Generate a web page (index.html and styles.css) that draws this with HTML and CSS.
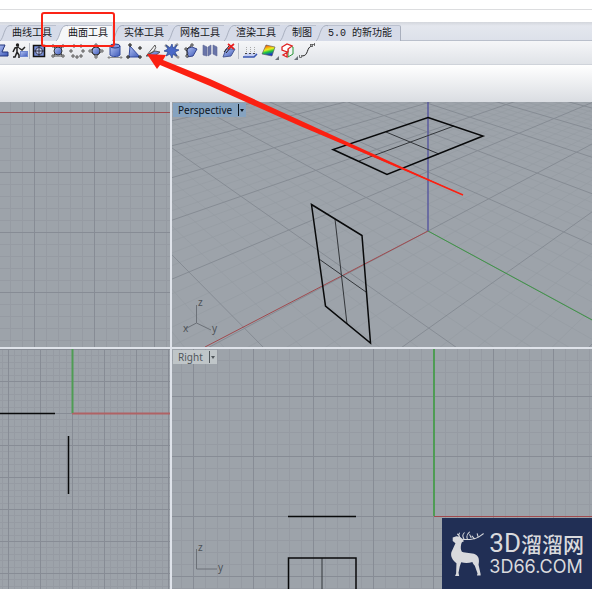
FILE: index.html
```html
<!DOCTYPE html>
<html lang="zh-CN">
<head>
<meta charset="utf-8">
<meta name="viewport" content="width=device-width, initial-scale=1">
<title>曲面工具</title>
<link rel="stylesheet" href="styles.css">
</head>
<body>
<svg class="defs" aria-hidden="true">
  <defs>
    <linearGradient id="blue" x1="0" y1="0" x2="1" y2="1"><stop offset="0" stop-color="#b4c4f4"/><stop offset="1" stop-color="#3c58b8"/></linearGradient>
    <linearGradient id="rainbow" x1="0" y1="0" x2="0.3" y2="1"><stop offset="0" stop-color="#e02010"/><stop offset=".3" stop-color="#f8a010"/><stop offset=".5" stop-color="#e8f020"/><stop offset=".7" stop-color="#20c840"/><stop offset="1" stop-color="#1830d0"/></linearGradient>
    <pattern id="grid-top" x="34" y="112" width="60" height="60" patternUnits="userSpaceOnUse">
      <path class="minor" d="M12.5 0V60M24.5 0V60M36.5 0V60M48.5 0V60M0 12.5H60M0 24.5H60M0 36.5H60M0 48.5H60"/>
      <path class="major" d="M.5 0V60M0 .5H60"/>
    </pattern>
    <pattern id="grid-front" x="8" y="381" width="32" height="32" patternUnits="userSpaceOnUse">
      <path class="minor" d="M6.5 0V32M13.5 0V32M19.5 0V32M26.5 0V32M0 6.5H32M0 13.5H32M0 19.5H32M0 26.5H32"/>
      <path class="major" d="M.5 0V32M0 .5H32"/>
    </pattern>
    <pattern id="grid-right" x="193" y="396" width="60" height="60" patternUnits="userSpaceOnUse">
      <path class="minor" d="M12.5 0V60M24.5 0V60M36.5 0V60M48.5 0V60M0 12.5H60M0 24.5H60M0 36.5H60M0 48.5H60"/>
      <path class="major" d="M.5 0V60M0 .5H60"/>
    </pattern>
  </defs>
</svg>

<header class="header">
  <div class="command"></div>
  <nav class="tabs" aria-label="工具">
    <button class="tab" type="button"><svg class="slash" viewBox="0 0 12 16"><path d="M0 16C4 13 4 1 10 .5H12V16Z"/></svg><span>曲线工具</span></button>
    <button class="tab active" type="button" aria-current="true"><svg class="slash" viewBox="0 0 12 16"><path d="M0 16C4 13 4 1 10 .5H12V16Z"/></svg><span>曲面工具</span></button>
    <button class="tab" type="button"><svg class="slash" viewBox="0 0 12 16"><path d="M0 16C4 13 4 1 10 .5H12V16Z"/></svg><span>实体工具</span></button>
    <button class="tab" type="button"><svg class="slash" viewBox="0 0 12 16"><path d="M0 16C4 13 4 1 10 .5H12V16Z"/></svg><span>网格工具</span></button>
    <button class="tab" type="button"><svg class="slash" viewBox="0 0 12 16"><path d="M0 16C4 13 4 1 10 .5H12V16Z"/></svg><span>渲染工具</span></button>
    <button class="tab" type="button"><svg class="slash" viewBox="0 0 12 16"><path d="M0 16C4 13 4 1 10 .5H12V16Z"/></svg><span>制图</span></button>
    <button class="tab last" type="button"><svg class="slash" viewBox="0 0 12 16"><path d="M0 16C4 13 4 1 10 .5H12V16Z"/></svg><span>5.0 的新功能</span></button>
  </nav>
  <div class="toolbar" role="toolbar" aria-label="曲面工具">
    <div class="group lead">
      <button class="tool" type="button" aria-label="曲面"><svg viewBox="0 0 16 16"><path d="M4 2h8l-3 7h6v4H6z" fill="url(#blue)" stroke="#25367c"/></svg></button>
      <button class="tool" type="button" aria-label="搬移"><svg viewBox="0 0 16 16"><rect x="8.500" y="8.500" width="7" height="5" fill="url(#blue)" stroke="#7088d0"/><circle cx="5.500" cy="2" r="1.700" fill="#222"/><path d="M7 4L3 5 1 9M5 5v4l-2 5H1M5 9l2 3v3M7 5l3 2 3-3" fill="none" stroke="#222" stroke-width="1.500"/></svg></button>
    </div>
    <div class="group">
      <button class="tool" type="button" aria-label="平面"><svg viewBox="0 0 16 16"><rect x="2.500" y="2.500" width="11" height="11" fill="#7890dc" stroke="#111" stroke-width="1.500"/><circle cx="8" cy="8" r="3.500" fill="#c4d0f8" stroke="#334"/><path d="M8 3v10M3 8h10" stroke="#334"/></svg></button>
      <button class="tool" type="button" aria-label="角点"><svg viewBox="0 0 16 16"><path d="M3 3l10 10M13 3L3 13" stroke="#444"/><circle cx="8" cy="8" r="4" fill="url(#blue)" stroke="#333"/><path d="M2 2h2v2H2zM12 2h2v2h-2zM2 12h2v2H2zM12 12h2v2h-2z" fill="#fff" stroke="#555"/><path d="M4 13h8" stroke="#555"/></svg></button>
      <button class="tool" type="button" aria-label="点阵"><svg viewBox="0 0 16 16"><path d="M4 2h2v2H4zM11 2h2v2h-2zM1 7h2v2H1zM13 7h2v2h-2zM3 12h2v2H3zM7 13h2v2H7zM11 12h2v2h-2z" fill="#fff" stroke="#333" stroke-width=".8"/></svg></button>
      <button class="tool" type="button" aria-label="嵌面"><svg viewBox="0 0 16 16"><path d="M8 2l6 6-6 6-6-6z" fill="#e8eaf0" stroke="#777"/><circle cx="8" cy="8" r="4" fill="url(#blue)" stroke="#333"/><path d="M7 1h2v2H7zM13 7h2v2h-2zM7 13h2v2H7zM1 7h2v2H1z" fill="#fff" stroke="#444" stroke-width=".8"/></svg></button>
      <button class="tool" type="button" aria-label="挤出"><svg viewBox="0 0 16 16"><path d="M3 3v9c1 2 9 2 10 0V3z" fill="url(#blue)" stroke="#334a9c"/><ellipse cx="8" cy="3" rx="5" ry="2" fill="#7f94e0" stroke="#26387c"/><path d="M1 14.500h14M2.500 13L1 14.500 2.500 16M13.500 13l1.500 1.500-1.500 1.500" fill="none" stroke="#777" stroke-width=".8"/></svg></button>
      <button class="tool" type="button" aria-label="三角曲面"><svg viewBox="0 0 16 16"><path d="M4 3l10 11H3z" fill="url(#blue)" stroke="#334a9c"/><path d="M3 1h2v2H3zM1 13h2v2H1zM13 13h2v2h-2zM13 4h2v2h-2z" fill="#fff" stroke="#111"/></svg></button>
      <button class="tool" type="button" aria-label="旋转"><svg viewBox="0 0 16 16"><path d="M1 13l9-5 5 1-5 4z" fill="url(#blue)" stroke="#444" stroke-width=".8"/><path d="M2 12L10 2q2 2-1 6z" fill="#f2f2f2" stroke="#333" stroke-width=".8"/></svg></button>
      <button class="tool" type="button" aria-label="炸开"><svg viewBox="0 0 16 16"><path d="M1 2l4 3M10 11l5 4M11 3l3-2" stroke="#999" stroke-width="2.500"/><path d="M8 1l1 4 4-3-2 4 4 1-4 2 2 4-4-2-1 4-2-4-4 2 2-4-4-1 4-2-2-4 4 3z" fill="#4868c8" stroke="#24408c" stroke-width=".7"/></svg></button>
      <button class="tool" type="button" aria-label="扫掠"><svg viewBox="0 0 16 16"><path d="M3 6l6-2 5 2-4 7-6 1 1-4z" fill="url(#blue)" stroke="#33438c"/><path d="M4 12V6l5-4" fill="none" stroke="#222"/><path d="M8 1h2v2H8zM3 12h2v2H3zM2 5h2v2H2z" fill="#fff" stroke="#222" stroke-width=".8"/></svg></button>
      <button class="tool" type="button" aria-label="放样"><svg viewBox="0 0 16 16"><path d="M1 2l4 2v9l-4-1zM6 4l3-2v9l-3 2zM11 2l4 2v9l-4-2z" fill="#6874a8" stroke="#5b6494" stroke-width=".6"/></svg></button>
      <button class="tool" type="button" aria-label="删除曲面"><svg viewBox="0 0 16 16"><path d="M5 6h9l-4 7-8 1z" fill="url(#blue)" stroke="#485894"/><path d="M3 9l5-6M5 10l5-6" stroke="#222"/><path d="M7 1l6 5M13 1L7 6" stroke="#e82020" stroke-width="1.700"/></svg></button>
    </div>
    <div class="group">
      <button class="tool" type="button" aria-label="投影"><svg viewBox="0 0 16 16"><path d="M4 10h11l-3 4H1z" fill="#c5cff2"/><path d="M1 14h11l3-3" fill="none" stroke="#3754b0" stroke-width="1.500"/><path d="M4.500 4v6M8.500 4v6M12.500 4v6" stroke="#aaa" stroke-dasharray="1 1"/><path d="M3 10.500h2M7 10.500h2M11 10.500h2" stroke="#444"/></svg></button>
      <button class="tool more" type="button" aria-label="曲率分析"><svg viewBox="0 0 16 16"><path d="M5 2l9 2-3 9-10-2z" fill="url(#rainbow)" stroke="#555" stroke-width=".6"/></svg></button>
      <button class="tool more" type="button" aria-label="方向"><svg viewBox="0 0 16 16"><path d="M6 2l7 2v7l-5 3V6z" fill="#f4f4f4" stroke="#279437"/><path d="M2 4l5-3 5 2-4 3v3l-5 3 4 2V9L2 7z" fill="#fff" stroke="#e02020" stroke-width="1.300"/></svg></button>
      <button class="tool" type="button" aria-label="混接曲线"><svg viewBox="0 0 16 16"><path d="M3 13c7 0 4-9 10-10" fill="none" stroke="#222"/><path d="M.500 12v2.500h2V12M11.500 1v3M13.500 1v3M15.500 0v3M11 1.500h5" fill="none" stroke="#555" stroke-width=".8"/></svg></button>
    </div>
  </div>
  <div class="panel"></div>
</header>

<main class="viewports">
  <section class="viewport" aria-label="Top">
    <svg class="scene" viewBox="0 102 170 245" preserveAspectRatio="xMinYMin slice">
      <rect x="0" y="102" width="170" height="245" fill="url(#grid-top)"/>
      <path class="axis-x" d="M0 112.500H170"/>
    </svg>
  </section>

  <section class="viewport" aria-label="Perspective">
    <svg class="scene" viewBox="172 102 420 245" preserveAspectRatio="xMinYMin slice">
      <path class="persp-minor" id="persp-minor"/>
      <path class="persp-major" id="persp-major"/>
      <path class="axis-x" d="M428 231L205 347"/>
      <path class="axis-y thin" d="M428 231L592 320"/>
      <path class="axis-z" d="M428 231V102"/>
      <path class="iso" d="M386 132L439 154M359 161L454 126M335 219L347 324M319 259L366 292"/>
      <path class="edge" d="M428 117.500L483 136 387 174.500 333 149.500ZM311.500 204.500L362 235.500 370.500 343 325.500 306Z"/>
      <path class="gnomon" d="M196.500 305V323L186 328.500M196.500 323L211 330"/>
      <text class="gnomon-label" x="198" y="306">z</text><text class="gnomon-label" x="183" y="332">x</text><text class="gnomon-label" x="212" y="332">y</text>
    </svg>
    <button class="view-title current" type="button"><span>Perspective</span><i class="caret"></i></button>
  </section>

  <section class="viewport" aria-label="Front">
    <svg class="scene" viewBox="0 349 170 240" preserveAspectRatio="xMinYMin slice">
      <rect x="0" y="349" width="170" height="240" fill="url(#grid-front)"/>
      <path class="axis-x wide" d="M72 413.500H170"/>
      <path class="axis-y" d="M72.500 349V413"/>
      <path class="edge" d="M0 413.500H55M68.500 436V494"/>
    </svg>
  </section>

  <section class="viewport" aria-label="Right">
    <svg class="scene" viewBox="172 349 420 240" preserveAspectRatio="xMinYMin slice">
      <rect x="172" y="349" width="420" height="240" fill="url(#grid-right)"/>
      <path class="axis-x" d="M434 516.500H592"/>
      <path class="axis-y" d="M434 349V516"/>
      <path class="iso" d="M322 558V589"/>
      <path class="edge" d="M288 516.500H356M288.500 589V558H356V589"/>
      <path class="gnomon" d="M196.500 549V569H217"/>
      <text class="gnomon-label" x="198" y="551">z</text><text class="gnomon-label" x="218" y="571">y</text>
    </svg>
    <button class="view-title" type="button"><span>Right</span><i class="caret"></i></button>
  </section>
</main>

<div class="highlight"></div>
<svg class="arrow" viewBox="0 0 320 146" aria-hidden="true"><path d="M0 2L19 3 16 8 63 27 316 143 153 74 63 34 13 13 10 17Z" fill="#fb2012"/><path d="M153 72L316 143" stroke="#fb2012" stroke-width="1.500"/></svg>

<aside class="brand">
  <svg class="deer" viewBox="55 65 100 135" aria-hidden="true">
    <path fill="#d9dadd" d="M63 84L74 80 84 82 92 89 96 95 90 98 88 103C86 112 86 119 90 126 101 131 119 128 130 134 140 140 142 150 139 164L145 191 145 196H134L136 190 128 167C124 163 122 160 121 156 110 160 99 160 88 157L84 168 80 188 82 197H70L73 190 74 160C62 149 56 140 59 127L71 101 63 94Z"/>
    <path fill="none" stroke="#d9dadd" stroke-width="3" stroke-linecap="round" d="M90 89C101 91 126 91 140 82L153 73M88 88C81 83 79 77 83 71M96 88C91 81 91 76 97 70M106 88C103 80 106 73 112 68M117 84L113 76M127 88L120 80M138 83L135 73M83 80L77 74"/>
  </svg>
  <div class="brand-text">
    <div class="brand-name"><b>3D</b><span>溜溜网</span></div>
    <div class="brand-url">3D66.COM</div>
  </div>
</aside>
<script src="grid.js"></script>
</body>
</html>
```
FILE: styles.css
```css
* { box-sizing: border-box; }
html, body { margin: 0; min-height: 100%; }
body {
  position: relative;
  display: flex;
  flex-direction: column;
  min-height: 100vh;
  overflow: hidden;
  background: #dde1e9;
  font-family: "Noto Sans", "Noto Sans CJK SC", sans-serif;
}
button { border: 0; padding: 0; background: none; font: inherit; color: inherit; }
.defs { position: absolute; width: 0; height: 0; }

.header { flex: none; }
.command { height: 22px; background: linear-gradient(#fff 9px, #dcdddf 9px, #dcdddf 10px, #fff 10px); }

.tabs {
  display: flex;
  align-items: flex-end;
  height: 19px;
  background: linear-gradient(#d3d6dc, #e4e7ee 4px, #dde1ea);
  border-bottom: 1px solid #b9bfcb;
  color: #16181c;
  font: 10px/16px "Liberation Mono", "Noto Sans CJK SC", monospace;
  white-space: pre;
}
.tab { display: flex; align-items: stretch; height: 16px; margin-bottom: -1px; }
.tab span { padding-right: 4px; border-top: 1px solid #bac0ce; background: #d6dbe8; }
.tab.active span { background: #f6f7f9; }
.tab.last span { padding-right: 8px; border-right: 1px solid #a9afbd; border-radius: 0 2px 0 0; }
.slash { width: 12px; height: 16px; background: #d6dbe8; }
.slash path { fill: #d6dbe8; stroke: #aab1c0; stroke-width: 1; stroke-dasharray: 22 60; }
.active .slash path { fill: #f6f7f9; }

.toolbar {
  display: flex;
  align-items: center;
  height: 24px;
  padding-bottom: 4px;
  background: linear-gradient(#f5f6f8, #e0e3e8);
  border-bottom: 1px solid #cfd3da;
}
.group { display: flex; gap: 3px; padding: 0 1px; }
.group + .group { border-left: 1px solid #b9bdc6; }
.group.lead { margin-left: -8px; }
.group:last-child { padding-left: 3px; }
.tool { position: relative; width: 16px; height: 16px; }
.tool svg { display: block; width: 16px; height: 16px; }
.tool.more::after {
  content: "";
  position: absolute;
  right: -2px;
  bottom: -1px;
  border-left: 4px solid transparent;
  border-bottom: 4px solid #6b7078;
}
.panel { height: 37px; background: linear-gradient(#fff, #dadde2); }

.viewports {
  flex: 1;
  display: grid;
  grid-template-columns: 170fr 420fr;
  grid-template-rows: 245fr 240fr;
  gap: 2px;
  background: #dfe3ea;
}
.viewport {
  position: relative;
  min-width: 0;
  min-height: 0;
  overflow: hidden;
  background: #9da3aa;
}
.scene { position: absolute; inset: 0; width: 100%; height: 100%; fill: none; }
.minor { stroke: #969ba3; }
.major { stroke: #878c95; }
.persp-minor { stroke: #959ba2; stroke-width: 1; opacity: .6; }
.persp-major { stroke: #868c94; stroke-width: 1; }
.axis-x { stroke: #a04a4e; }
.axis-x.wide { stroke: #b06264; stroke-width: 2; }
.axis-y { stroke: #4f9c54; stroke-width: 2; }
.axis-y.thin { stroke: #3f9646; stroke-width: 1; }
.axis-z { stroke: #5a5a9e; stroke-width: 1.500; }
.edge { stroke: #08090a; stroke-width: 1.500; }
.iso { stroke: #33363a; stroke-width: 1; }
.gnomon { stroke: #6c7178; }
.gnomon-label { fill: #4e5359; font-size: 10px; }

.view-title {
  position: absolute;
  top: 1px;
  left: 1px;
  display: flex;
  align-items: center;
  gap: 6px;
  height: 14px;
  padding: 0 2px 0 5px;
  background: #bfc5c8;
  color: #50565b;
  font-size: 10px;
  line-height: 14px;
}
.view-title.current { background: #86a3c0; color: #0d141c; }
.caret { display: flex; align-items: center; height: 12px; padding-left: 1px; border-left: 1px solid; }
.caret::before { content: ""; border: 2px solid transparent; border-top: 3px solid; border-bottom: 0; }

.highlight {
  position: absolute;
  top: 12px;
  left: 41px;
  width: 74px;
  height: 35px;
  border: 2px solid #fb2416;
  border-radius: 3px;
}
.arrow { position: absolute; top: 52px; left: 147px; width: 320px; height: 146px; }

.brand {
  position: absolute;
  right: 0;
  bottom: 0;
  display: flex;
  align-items: center;
  gap: 5px;
  padding: 12px 8px;
  background: #212f55;
  color: #d9dadd;
}
.deer { width: 34px; height: 46px; }
.brand-name { display: flex; align-items: center; height: 27px; }
.brand-name b { font: 26px/27px "Roboto", sans-serif; }
.brand-name span { font: 500 21px/27px "Noto Sans CJK SC", sans-serif; }
.brand-url { font: 18px/20px "Inter", sans-serif; }
```
FILE: grid.js
```js
// Projects the ground plane: i runs along the red axis, j along the green one.
function project(i, j) {
  const w = 1 - 0.127 * i - 0.115 * j;
  return [428 + (69 * j - 68.4 * i) / w, 231 + (36.3 * i + 37.3 * j) / w]
    .map(v => v.toFixed(1)).join(" ");
}

const major = [];
const minor = [];
for (let n = -60; n <= 30; n++) {
  const k = n / 5;
  const out = n % 5 ? minor : major;
  const jEnd = (0.92 - 0.127 * k) / 0.115;
  const iEnd = (0.92 - 0.115 * k) / 0.127;
  out.push(`M${project(k, -14)}L${project(k, jEnd)}`);
  out.push(`M${project(-14, k)}L${project(iEnd, k)}`);
}
document.getElementById("persp-major").setAttribute("d", major.join(""));
document.getElementById("persp-minor").setAttribute("d", minor.join(""));
```
